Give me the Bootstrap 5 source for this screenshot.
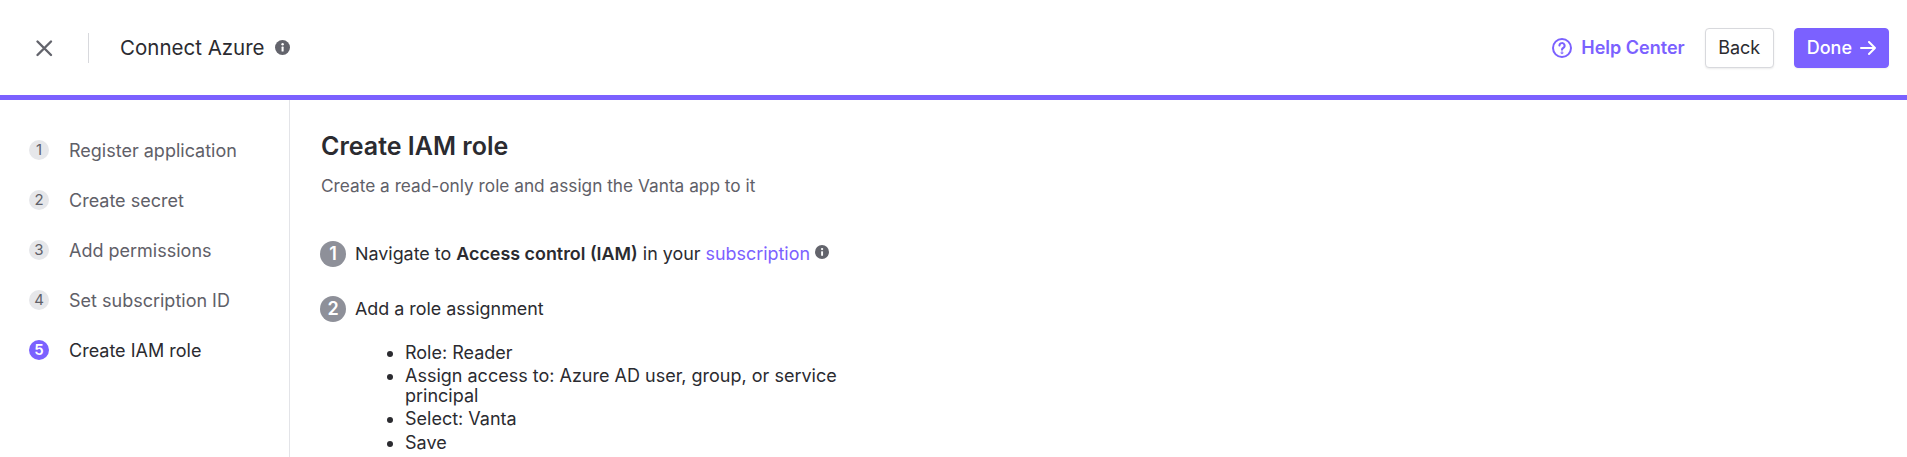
<!DOCTYPE html>
<html lang="en">
<head>
    <meta charset="UTF-8">
    <meta name="viewport" content="width=device-width, initial-scale=1.0">
    <title>Connect Azure</title>
    <link href="https://cdn.jsdelivr.net/npm/bootstrap@5.3.2/dist/css/bootstrap.min.css" rel="stylesheet">
    <style>
        body {
            font-family: Inter, "Liberation Sans", sans-serif;
            font-size: 18px;
            color: #2b2b30;
            background: #fff;
            height: 457px;
            overflow: hidden;
        }
        .top-head {
            height: 100px;
            border-bottom: 5px solid #7b61ff;
            padding: 0 18px 0 34px;
        }
        .head-rule {
            width: 1px;
            height: 30px;
            background: #d8d9dd;
            margin: 0 31px 0 34px;
        }
        .head-title { font-size: 20.5px; line-height: 24px; margin-right: 10px; }
        .close-btn { padding: 0; border: 0; background: none; line-height: 0; }
        .help-link {
            color: #7b61ff;
            font-weight: 600;
            text-decoration: none;
            margin-right: 20px;
        }
        .btn-back, .btn-done {
            font-size: 18px;
            line-height: 24px;
            border-radius: 4px;
        }
        .btn-back {
            color: #2b2b30;
            background: #fff;
            border: 1px solid #d8d9dd;
            box-shadow: 0 1px 2px rgba(0,0,0,.08);
            margin-right: 20px;
            padding: 7px 12.5px;
        }
        .btn-done {
            color: #fff;
            background: #7b61ff;
            border: 1px solid #7b61ff;
            font-weight: 500;
            box-shadow: 0 1px 2px rgba(0,0,0,.06);
            padding: 7px 12px;
        }
        .btn-done:hover { color: #fff; background: #7b61ff; }
        .side-nav {
            width: 290px;
            height: 357px;
            border-right: 1px solid #e3e4e8;
            padding: 36px 0 0 29px;
            flex-shrink: 0;
        }
        .side-item { height: 50px; color: #5f6068; gap: 20px; line-height: 30px; }
        .side-item.active { color: #2b2b30; }
        .side-num {
            width: 20px;
            height: 20px;
            border-radius: 50%;
            background: #e6e7ea;
            color: #5f6068;
            font-size: 15px;
            line-height: 20px;
            text-align: center;
        }
        .side-item.active .side-num { background: #7b61ff; color: #fff; font-weight: 600; }
        .main-col { padding: 28px 0 0 31px; width: 560px; }
        .page-head { font-size: 25px; line-height: 36px; font-weight: 600; color: #2b2b30; margin: 0 0 8px; }
        .page-sub { color: #5f6068; font-size: 17.25px; line-height: 28px; margin: 0 0 41px; }
        .step-row { gap: 9px; line-height: 26px; margin-bottom: 29px; font-size: 17.9px; }
        .step-num {
            width: 26px;
            height: 26px;
            margin-left: -1px;
            border-radius: 50%;
            background: #8e9099;
            color: #fff;
            font-size: 18px;
            font-weight: 600;
            line-height: 26px;
            text-align: center;
        }
        .step-link { color: #7b61ff; text-decoration: none; }
        .info-dot { margin-left: 5px; vertical-align: 1px; }
        .sub-list { padding-left: 50px; margin: -8px 0 0 34px; width: 495px; line-height: 20px; }
        .sub-list li { margin-bottom: 3.2px; }
    </style>
</head>
<body>
    <header class="top-head d-flex align-items-center">
        <button class="close-btn" type="button" aria-label="Close">
            <svg width="20" height="20" viewBox="0 0 20 20" fill="none" stroke="#63646c" stroke-width="2.4" stroke-linecap="round"><path d="M3.5 3.5l13.5 13.5M17 3.5L3.5 17"/></svg>
        </button>
        <div class="head-rule"></div>
        <div class="head-title">Connect Azure</div>
        <svg width="15" height="15" viewBox="0 0 16 16"><circle cx="8" cy="8" r="8" fill="#63646c"/><rect x="7" y="7" width="2.2" height="5.2" rx=".6" fill="#fff"/><circle cx="8.1" cy="4.6" r="1.3" fill="#fff"/></svg>
        <div class="ms-auto d-flex align-items-center">
            <a class="help-link d-flex align-items-center gap-2" href="#">
                <svg width="22" height="22" viewBox="0 0 22 22" fill="none" stroke="#7b61ff" stroke-width="2" stroke-linecap="round"><circle cx="11" cy="11" r="9"/><path d="M8.4 8.6a2.6 2.6 0 1 1 3.8 2.4c-.8.4-1.2 1-1.2 1.8"/><circle cx="11" cy="15.8" r=".4"/></svg>
                Help Center
            </a>
            <button class="btn btn-back" type="button">Back</button>
            <button class="btn btn-done d-flex align-items-center gap-2" type="button">
                Done
                <svg width="16" height="16" viewBox="0 0 16 16" fill="none" stroke="#fff" stroke-width="2" stroke-linecap="round" stroke-linejoin="round"><path d="M1 8h14M9 2l6 6-6 6"/></svg>
            </button>
        </div>
    </header>
    <div class="d-flex">
        <nav class="side-nav">
            <div class="side-item d-flex align-items-start"><span class="side-num mt-1">1</span><span>Register application</span></div>
            <div class="side-item d-flex align-items-start"><span class="side-num mt-1">2</span><span>Create secret</span></div>
            <div class="side-item d-flex align-items-start"><span class="side-num mt-1">3</span><span>Add permissions</span></div>
            <div class="side-item d-flex align-items-start"><span class="side-num mt-1">4</span><span>Set subscription ID</span></div>
            <div class="side-item active d-flex align-items-start"><span class="side-num mt-1">5</span><span>Create IAM role</span></div>
        </nav>
        <main class="main-col">
            <h1 class="page-head">Create IAM role</h1>
            <p class="page-sub">Create a read-only role and assign the Vanta app to it</p>
            <div class="step-row d-flex align-items-center">
                <span class="step-num">1</span>
                <span>Navigate to <strong class="fw-semibold">Access control (IAM)</strong> in your <a class="step-link" href="#">subscription</a><svg class="info-dot" width="14" height="14" viewBox="0 0 16 16"><circle cx="8" cy="8" r="8" fill="#63646c"/><rect x="7" y="7" width="2.2" height="5.2" rx=".6" fill="#fff"/><circle cx="8.1" cy="4.6" r="1.3" fill="#fff"/></svg></span>
            </div>
            <div class="step-row d-flex align-items-center">
                <span class="step-num">2</span>
                <span>Add a role assignment</span>
            </div>
            <ul class="sub-list">
                <li>Role: Reader</li>
                <li>Assign access to: Azure AD user, group, or service principal</li>
                <li>Select: Vanta</li>
                <li>Save</li>
            </ul>
        </main>
    </div>
    <script src="https://cdn.jsdelivr.net/npm/bootstrap@5.3.2/dist/js/bootstrap.bundle.min.js"></script>
</body>
</html>
